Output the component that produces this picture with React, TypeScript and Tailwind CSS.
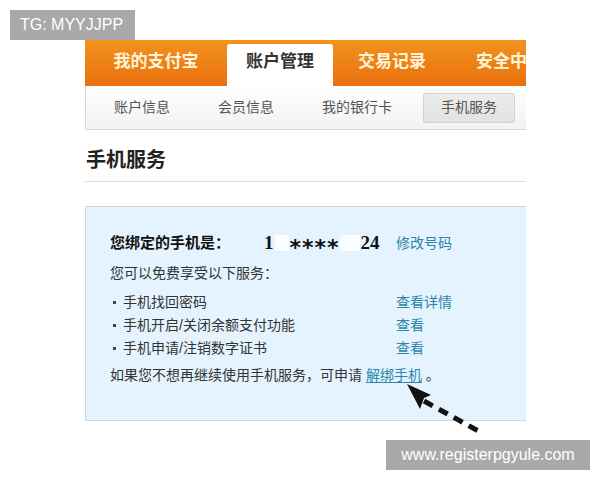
import React from 'react';

const tabs = [
  { label: '我的支付宝', w: 'w-[142px]', active: false },
  { label: '账户管理', w: 'w-[106px]', active: true },
  { label: '交易记录', w: 'w-[118px]', active: false },
  { label: '安全中心', w: 'w-[118px]', active: false },
];

const subTabs = ['账户信息', '会员信息', '我的银行卡', '手机服务'];

const services = [
  { text: '手机找回密码', link: '查看详情' },
  { text: '手机开启/关闭余额支付功能', link: '查看' },
  { text: '手机申请/注销数字证书', link: '查看' },
];

export default function App() {
  return (
    <div className="relative w-[600px] h-[480px] overflow-hidden bg-white font-['Liberation_Sans','Noto_Sans_CJK_SC',sans-serif]">
      {/* Top watermark */}
      <div className="absolute left-[10px] top-[10px] w-[125px] h-[30px] bg-[#a9a9a9] text-white text-[16px] flex items-center pl-[10px] z-10">
        TG: MYYJJPP
      </div>

      <div className="ml-[85px] mt-[40px] w-[441px] overflow-hidden">
        {/* Main nav */}
        <div className="flex h-[46px] bg-gradient-to-b from-[#f3921f] to-[#e8700c] pt-[4px] whitespace-nowrap">
          {tabs.map((t) =>
            t.active ? (
              <div
                key={t.label}
                className={`${t.w} shrink-0 flex items-center justify-center pb-[7px] bg-white rounded-t-[3px] text-[17px] font-bold text-[#333]`}
              >
                {t.label}
              </div>
            ) : (
              <div
                key={t.label}
                className={`${t.w} shrink-0 flex items-center justify-center pb-[7px] text-[17px] font-bold text-[#fff4d8]`}
              >
                {t.label}
              </div>
            )
          )}
        </div>

        {/* Sub nav */}
        <div className="flex items-center gap-[14px] h-[44px] pl-[11px] border-l border-b border-[#d6d6d6] bg-gradient-to-b from-white to-[#f2f2f2] text-[14px] text-[#555] whitespace-nowrap">
          {subTabs.map((s, i) =>
            i === subTabs.length - 1 ? (
              <div
                key={s}
                className="h-[30px] px-[17px] flex items-center bg-gradient-to-b from-[#ececec] to-[#e2e2e2] border border-[#d2d2d2] rounded-[2px]"
              >
                {s}
              </div>
            ) : (
              <div key={s} className="px-[17px]">
                {s}
              </div>
            )
          )}
        </div>

        {/* Heading */}
        <div className="mt-[17px] pb-[8px] pl-[1px] border-b border-[#dedede] text-[20px] font-bold text-[#222] leading-[26px]">
          手机服务
        </div>

        {/* Info box */}
        <div className="mt-[24px] h-[215px] bg-[#e4f3fd] border-t border-b border-l border-[#cfd6db] pl-[24px] pt-[24px] text-[14px] text-[#333]">
          <div className="flex items-center h-[24px]">
            <span className="w-[152px] text-[15px] font-bold text-[#111]">您绑定的手机是：</span>
            <span className="flex items-center w-[134px] font-['Liberation_Serif',serif] text-[19px] font-bold text-[#111]">
              <span className="ml-[2px]">1</span>
              <span className="w-[14px] h-[16px] bg-white/80 mx-[1px]" />
              <span className="font-['DejaVu_Sans',sans-serif] text-[22px] leading-none tracking-[1px] translate-y-[5px]">****</span>
              <span className="w-[20px] h-[16px] bg-white/80 mr-[1px]" />
              <span>24</span>
            </span>
            <span className="text-[#2a86ad]">修改号码</span>
          </div>
          <div className="mt-[7px] leading-[23px]">您可以免费享受以下服务：</div>
          <div className="mt-[6px]">
            {services.map((s) => (
              <div key={s.text} className="flex items-center h-[23px]">
                <div className="w-[286px] flex items-center">
                  <span className="w-[3px] h-[3px] bg-[#444] ml-[3px] mr-[7px]" />
                  <span>{s.text}</span>
                </div>
                <span className="text-[#2a86ad]">{s.link}</span>
              </div>
            ))}
          </div>
          <div className="mt-[4px] leading-[23px] whitespace-nowrap">
            如果您不想再继续使用手机服务，可申请 <span className="text-[#2a86ad] underline underline-offset-2">解绑手机</span> 。
          </div>
        </div>
      </div>

      {/* Arrow */}
      <svg className="absolute left-[400px] top-[376px]" width="90" height="64" viewBox="0 0 90 64">
        <polygon points="7,8 31,19 24,22 20,33" fill="#111" />
        <line x1="24" y1="25" x2="82" y2="57" stroke="#111" strokeWidth="5" strokeDasharray="10 7" />
      </svg>

      {/* Bottom watermark */}
      <div className="absolute left-[386px] top-[440px] w-[204px] h-[30px] bg-[#a9a9a9] text-white text-[16px] flex items-center justify-center">
        www.registerpgyule.com
      </div>
    </div>
  );
}
